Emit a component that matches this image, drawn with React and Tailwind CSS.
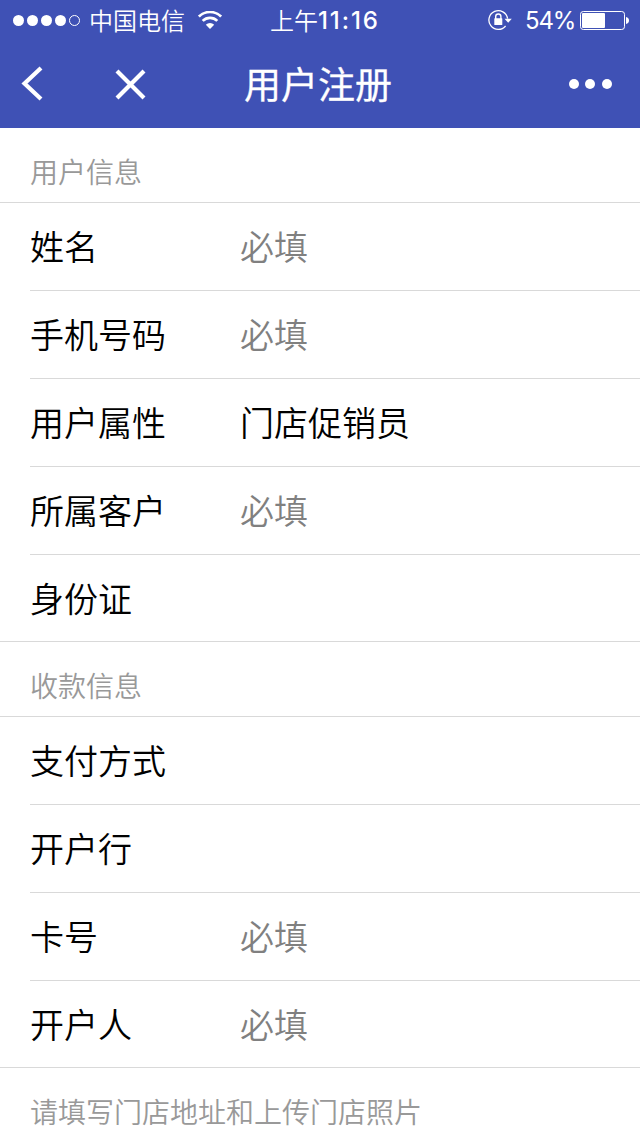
import React from "react";

const sections = [
    {
        title: "用户信息",
        rows: [
            { label: "姓名", placeholder: "必填" },
            { label: "手机号码", placeholder: "必填" },
            { label: "用户属性", value: "门店促销员" },
            { label: "所属客户", placeholder: "必填" },
            { label: "身份证" },
        ],
    },
    {
        title: "收款信息",
        rows: [
            { label: "支付方式" },
            { label: "开户行" },
            { label: "卡号", placeholder: "必填" },
            { label: "开户人", placeholder: "必填" },
        ],
    },
];

const SignalDots = () => (
    <svg className="w-[68px] h-3" viewBox="0 0 68 12" fill="white">
        <circle cx="5.5" cy="6.5" r="5.5" />
        <circle cx="19.5" cy="6.5" r="5.5" />
        <circle cx="33.5" cy="6.5" r="5.5" />
        <circle cx="47.5" cy="6.5" r="5.5" />
        <circle cx="61.5" cy="6.5" r="5" fill="none" stroke="white" />
    </svg>
);

const WifiIcon = () => (
    <svg className="w-6 h-[18px]" viewBox="0 0 24 18" fill="none" stroke="white" strokeWidth="2.7">
        <path d="M0.9 5.6a15.7 15.7 0 0 1 22.2 0" />
        <path d="M4.7 9.9a10.3 10.3 0 0 1 14.6 0" />
        <path d="M7.8 13.7a6 6 0 0 1 8.4 0L12 18z" fill="white" stroke="none" />
    </svg>
);

const RotationLockIcon = () => (
    <svg className="w-6 h-[22px]" viewBox="0 0 24 22" fill="none" stroke="white">
        <path d="M19.6 9.6A9.4 9.4 0 1 0 17.6 17" strokeWidth="1.3" />
        <path d="M16.5 9.8h7.3l-3.6 3.9z" fill="white" stroke="none" />
        <rect x="6.3" y="9.2" width="8" height="6.8" rx="0.6" fill="white" stroke="none" />
        <path d="M7.7 10V7.6a2.6 2.6 0 0 1 5.2 0V10" strokeWidth="1.4" />
    </svg>
);

const BatteryIcon = () => (
    <svg className="w-[49px] h-5" viewBox="0 0 49 20">
        <rect x="0.5" y="1.5" width="44" height="18" rx="2.8" fill="none" stroke="white" />
        <rect x="2" y="3" width="23" height="15" rx="1" fill="white" />
        <path d="M46 7c2 .4 3 1.6 3 3.5s-1 3.1-3 3.5z" fill="white" />
    </svg>
);

const StatusBar = () => (
    <div className="h-10 flex items-center text-2xl leading-10">
        <div className="w-[270px] pl-[13px] flex items-center">
            <SignalDots />
            <span className="ml-2 mr-[13px]">中国电信</span>
            <WifiIcon />
        </div>
        <div className="w-[218px] flex items-center">
            <span>上午</span>
            <span className="pt-0.5 font-['Inter'] font-medium tracking-[1.9px]">11:16</span>
        </div>
        <RotationLockIcon />
        <span className="w-[55px] pt-0.5 ml-[13px] font-['Inter'] font-normal tracking-[-1.2px]">54%</span>
        <BatteryIcon />
    </div>
);

const NavBar = () => (
    <div className="h-[88px] flex items-center">
        <svg className="w-[22px] h-9 ml-[21px]" viewBox="0 0 22 36" fill="none" stroke="white" strokeWidth="4.2">
            <path d="M20 2L3.5 17.5L20 33" />
        </svg>
        <svg className="w-8 h-8 ml-[71px]" viewBox="0 0 32 32" fill="none" stroke="white" strokeWidth="4.2">
            <path d="M3 3l27 27M30 3L3 30" />
        </svg>
        <h1 className="w-[325px] pb-px ml-[98px] text-[37px] font-normal [-webkit-text-stroke:0.3px_white] leading-[85px]">用户注册</h1>
        <svg className="w-11 h-3" viewBox="0 0 44 12" fill="white">
            <circle cx="5" cy="6" r="5" />
            <circle cx="21" cy="6" r="5" />
            <circle cx="38" cy="6" r="5" />
        </svg>
    </div>
);

const FormRow = ({ label, value, placeholder }) => (
    <div className="h-[88px] last:h-[87px] pb-0.5 last:pb-0 ml-[30px] last:ml-0 last:pl-[30px] flex items-center border-b border-[#d9d9d9] text-[34px] leading-[48px] text-black">
        <span className="w-[210px]">{label}</span>
        {value && <span>{value}</span>}
        {placeholder && <span className="text-[#808080]">{placeholder}</span>}
    </div>
);

const App = () => {
    return (
        <div className="w-[640px] h-[1136px] overflow-hidden bg-white font-['Noto_Sans_CJK_SC',sans-serif] font-[350]">
            <header className="h-32 bg-[#3f51b5] text-white">
                <StatusBar />
                <NavBar />
            </header>
            {sections.map((section) => (
                <section key={section.title}>
                    <h2 className="h-[75px] pl-[30px] pt-[13px] border-b border-[#d9d9d9] text-[28px] leading-[60px] font-[350] text-[#999]">
                        {section.title}
                    </h2>
                    <div>
                        {section.rows.map((row) => (
                            <FormRow key={row.label} {...row} />
                        ))}
                    </div>
                </section>
            ))}
            <p className="pl-[30px] pt-[13px] text-[28px] leading-[60px] text-[#999]">
                请填写门店地址和上传门店照片
            </p>
        </div>
    );
};

export default App;
